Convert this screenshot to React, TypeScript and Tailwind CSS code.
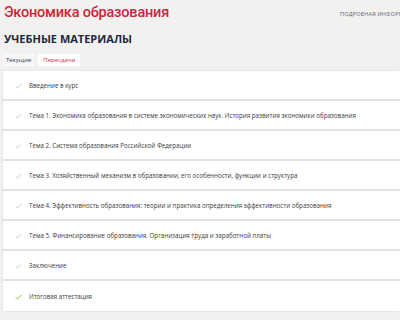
const items = [
  "Введение в курс",
  "Тема 1. Экономика образования в системе экономических наук. История развития экономики образования",
  "Тема 2. Система образования Российской Федерации",
  "Тема 3. Хозяйственный механизм в образовании, его особенности, функции и структура",
  "Тема 4. Эффективность образования: теории и практика определения эффективности образования",
  "Тема 5. Финансирование образования. Организация труда и заработной платы",
  "Заключение",
  "Итоговая аттестация",
];

const Check = ({ green }: { green?: boolean }) => (
  <svg width="7" height="6" viewBox="0 0 7 6" className="shrink-0">
    <path
      d="M0.6 3.2 L2.5 5 L6.4 0.8"
      fill="none"
      stroke={green ? "#8cc63f" : "#c9c9c9"}
      strokeWidth="1"
    />
  </svg>
);

export default function App() {
  return (
    <div
      className="w-[400px] h-[320px] overflow-hidden bg-[#f2f1ef]"
      style={{ fontFamily: '"Open Sans", "Noto Sans", sans-serif' }}
    >
      <div className="flex items-start justify-between pl-[4px] pt-[4px]">
        <h1
          className="text-[14.5px] leading-[18px] font-medium text-[#cf2340] tracking-[-0.2px]"
          style={{ fontFamily: 'Roboto, "Noto Sans", sans-serif' }}
        >
          Экономика образования
        </h1>
        <div className="mt-[6px] whitespace-nowrap text-[5.5px] uppercase tracking-[0.2px] text-[#5b6477] w-[60px] overflow-hidden">
          подробная информация
        </div>
      </div>
      <h2 className="pl-[4px] mt-[10px] text-[11px] leading-[14px] font-bold text-[#1c2740]">
        УЧЕБНЫЕ МАТЕРИАЛЫ
      </h2>
      <div className="flex gap-[4px] pl-[3px] mt-[8px]">
        <div className="px-[3px] h-[12px] flex items-center bg-[#f7f7f7] text-[6px] text-[#2a3550] rounded-[1px]">
          Текущие
        </div>
        <div className="px-[5px] h-[12px] flex items-center bg-white text-[6px] text-[#cf2340] rounded-[1px]">
          Пересдачи
        </div>
      </div>
      <div className="ml-[3px] mt-[5px] bg-white shadow-[0_0_2px_rgba(0,0,0,0.12)]">
        {items.map((t, i) => (
          <div
            key={i}
            className={`flex items-center gap-[7px] pl-[12px] h-[30px] pt-[1px] text-[6.2px] text-[#3a3a3a] whitespace-nowrap ${
              i < items.length - 1 ? "border-b-2 border-[#e2e2e2]" : ""
            }`}
          >
            <Check green={i === items.length - 1} />
            <span>{t}</span>
          </div>
        ))}
      </div>
    </div>
  );
}
